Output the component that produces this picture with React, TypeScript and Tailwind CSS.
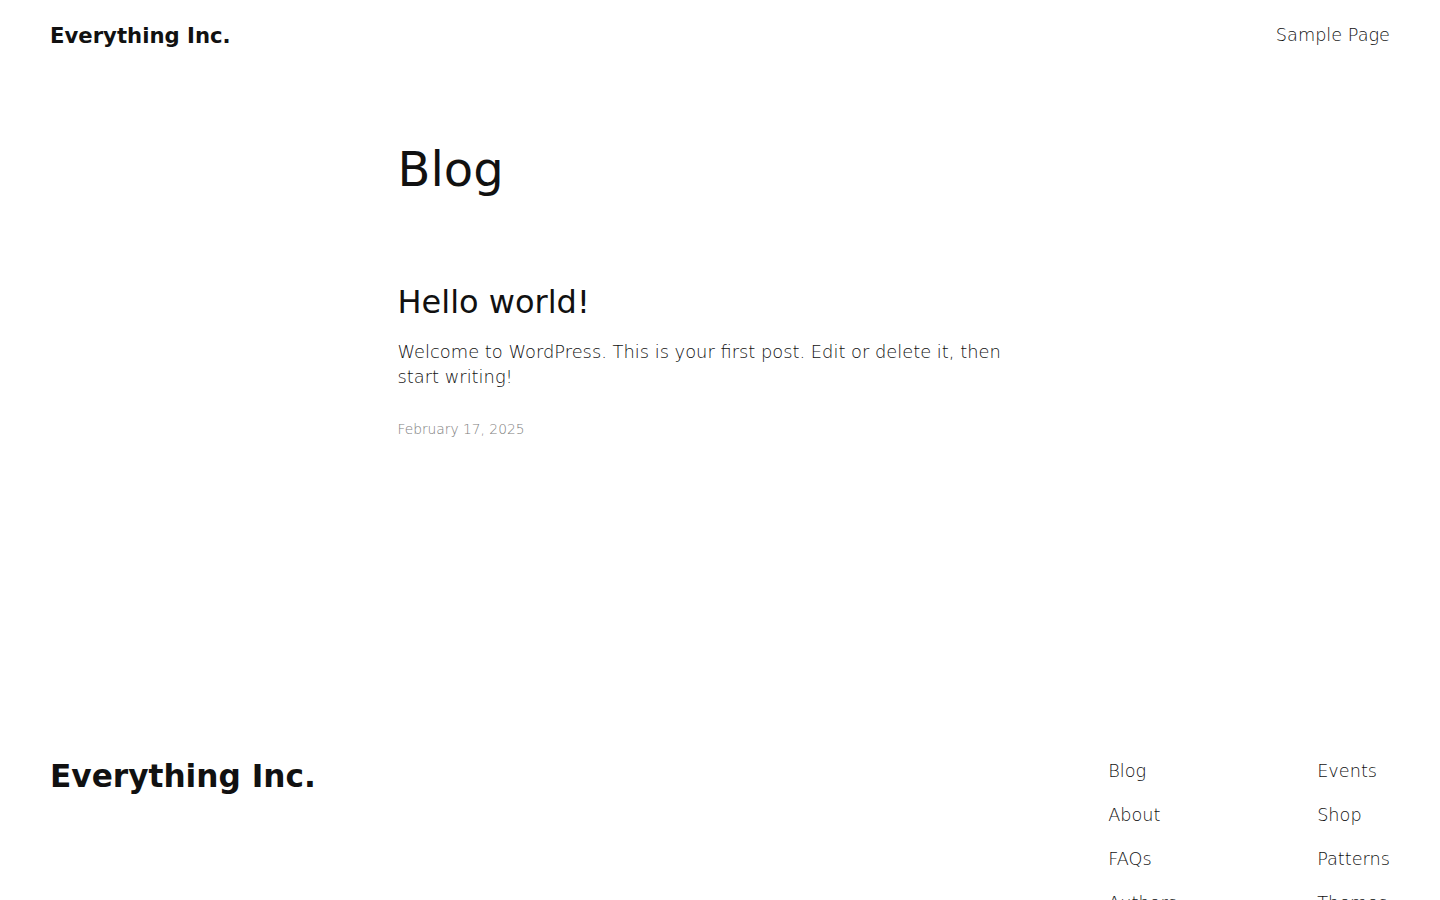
const font = { fontFamily: '"DejaVu Sans", "Noto Sans", sans-serif' };

const footerCols = [
  ["Blog", "About", "FAQs", "Authors"],
  ["Events", "Shop", "Patterns", "Themes"],
];

export default function App() {
  return (
    <div className="h-screen overflow-hidden bg-white text-[#111111]" style={font}>
      {/* Header */}
      <header className="flex items-center justify-between px-[50px] pt-[1px] h-[70px]">
        <a className="text-[21.2px] font-bold leading-none">Everything Inc.</a>
        <nav>
          <a className="text-[17.7px] font-light text-[#111111]">Sample Page</a>
        </nav>
      </header>

      {/* Main */}
      <main className="mx-auto w-[645px] pt-[71px] h-[601px]">
        <h1 className="text-[48px] leading-[1.2] font-normal">Blog</h1>
        <article className="mt-[84px]">
          <h2 className="text-[32px] leading-[1.2] font-normal">Hello world!</h2>
          <p className="mt-[18px] text-[17.85px] leading-[25px] font-light text-[#111111]">
            Welcome to WordPress. This is your first post. Edit or delete it, then start writing!
          </p>
          <div className="mt-[30px] text-[13.8px] font-light text-[#808080]">February 17, 2025</div>
        </article>
      </main>

      {/* Footer */}
      <footer className="flex justify-between px-[50px]">
        <a className="text-[31.2px] font-bold leading-none pt-[90px]">Everything Inc.</a>
        <div className="flex pt-[89px]">
          {footerCols.map((col, i) => (
            <ul key={i} className={i === 0 ? "w-[209px] flex flex-col gap-[22px]" : "flex flex-col gap-[22px]"}>
              {col.map((item) => (
                <li key={item} className="text-[17.7px] font-light leading-[22px]">
                  {item}
                </li>
              ))}
            </ul>
          ))}
        </div>
      </footer>
    </div>
  );
}
